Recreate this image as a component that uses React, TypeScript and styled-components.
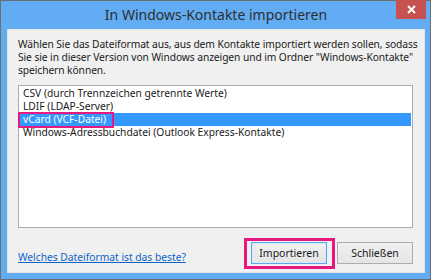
import React from "react";
import styled, { createGlobalStyle } from "styled-components";

const Global = createGlobalStyle`
  html, body { margin: 0; padding: 0; background: #ffffff; }
  body { font-family: "Noto Sans", "Open Sans", sans-serif; }
  * { box-sizing: border-box; }
`;

const Window = styled.div`
  width: 431px;
  height: 280px;
  border: 1px solid #6e6e6e;
  background: #62acf3;
  display: flex;
  flex-direction: column;
  padding: 0 5px 6px 6px;
`;

const TitleBar = styled.div`
  position: relative;
  height: 28px;
  display: flex;
  align-items: center;
  justify-content: center;
  flex: none;
`;

const Title = styled.div`
  font-family: "Noto Sans", sans-serif;
  font-size: 14px;
  color: #2e2e2e;
  margin-top: -1px;
`;

const CloseButton = styled.div`
  position: absolute;
  right: -1px;
  top: -1px;
  width: 30px;
  height: 19px;
  background: #c75050;
  color: #ffffff;
  display: flex;
  align-items: center;
  justify-content: center;
`;

const Panel = styled.div`
  flex: 1;
  background: #f0f0f0;
  border: 1px solid #e4e4e4;
  display: flex;
  flex-direction: column;
  padding: 8px 11px 8px 10px;
  font-family: "Noto Sans", sans-serif;
  font-size: 10.25px;
  color: #1a1a1a;
`;

const Intro = styled.p`
  margin: 0;
  line-height: 13px;
  white-space: nowrap;
  letter-spacing: -0.08px;
`;

const ListBox = styled.div`
  position: relative;
  margin-top: 8px;
  height: 143px;
  background: #ffffff;
  border: 1px solid #a9acb2;
  padding: 1px 1px;
  display: flex;
  flex-direction: column;
`;

const Item = styled.div<{ $selected?: boolean }>`
  position: relative;
  height: 13px;
  line-height: 13px;
  padding-left: 3px;
  white-space: nowrap;
  background: ${(p) => (p.$selected ? "#3399ff" : "transparent")};
  color: ${(p) => (p.$selected ? "#ffffff" : "#1a1a1a")};
`;

const PinkMark = styled.span`
  position: absolute;
  left: -2px;
  top: -1px;
  width: 96px;
  height: 16px;
  border: 2px solid #e5197f;
`;

const Footer = styled.div`
  margin-top: auto;
  display: flex;
  align-items: center;
  justify-content: space-between;
  height: 22px;
`;

const Link = styled.a`
  color: #0a64c8;
  text-decoration: underline;
  margin-top: 8px;
  cursor: pointer;
`;

const Buttons = styled.div`
  display: flex;
  gap: 10px;
`;

const Button = styled.button<{ $default?: boolean }>`
  width: 76px;
  height: 22px;
  font-family: "Noto Sans", sans-serif;
  font-size: 10.5px;
  color: #1a1a1a;
  background: linear-gradient(#f0f0f0, #e5e5e5);
  border: 1px solid ${(p) => (p.$default ? "#5ea6ec" : "#adadad")};
  box-shadow: ${(p) => (p.$default ? "inset 0 0 0 1px #d6e9fb" : "none")};
  padding: 0;
`;

const Highlight = styled.div`
  position: relative;
`;

const PinkFrame = styled.span`
  position: absolute;
  left: -7px;
  right: -8px;
  top: -4px;
  bottom: -5px;
  border: 3px solid #e5197f;
  pointer-events: none;
`;

export default function App() {
  return (
    <>
      <Global />
      <Window>
        <TitleBar>
          <Title>In Windows-Kontakte importieren</Title>
          <CloseButton>
            <svg width="9" height="9" viewBox="0 0 9 9">
              <path d="M1 1 L8 8 M8 1 L1 8" stroke="#fff" strokeWidth="2" />
            </svg>
          </CloseButton>
        </TitleBar>
        <Panel>
          <Intro>
            Wählen Sie das Dateiformat aus, aus dem Kontakte importiert werden sollen, sodass
            <br />
            Sie sie in dieser Version von Windows anzeigen und im Ordner "Windows-Kontakte"
            <br />
            speichern können.
          </Intro>
          <ListBox>
            <Item>CSV (durch Trennzeichen getrennte Werte)</Item>
            <Item>LDIF (LDAP-Server)</Item>
            <Item $selected>
              vCard (VCF-Datei)
              <PinkMark />
            </Item>
            <Item>Windows-Adressbuchdatei (Outlook Express-Kontakte)</Item>
          </ListBox>
          <Footer>
            <Link>Welches Dateiformat ist das beste?</Link>
            <Buttons>
              <Highlight>
                <Button $default>Importieren</Button>
                <PinkFrame />
              </Highlight>
              <Button>Schließen</Button>
            </Buttons>
          </Footer>
        </Panel>
      </Window>
    </>
  );
}
